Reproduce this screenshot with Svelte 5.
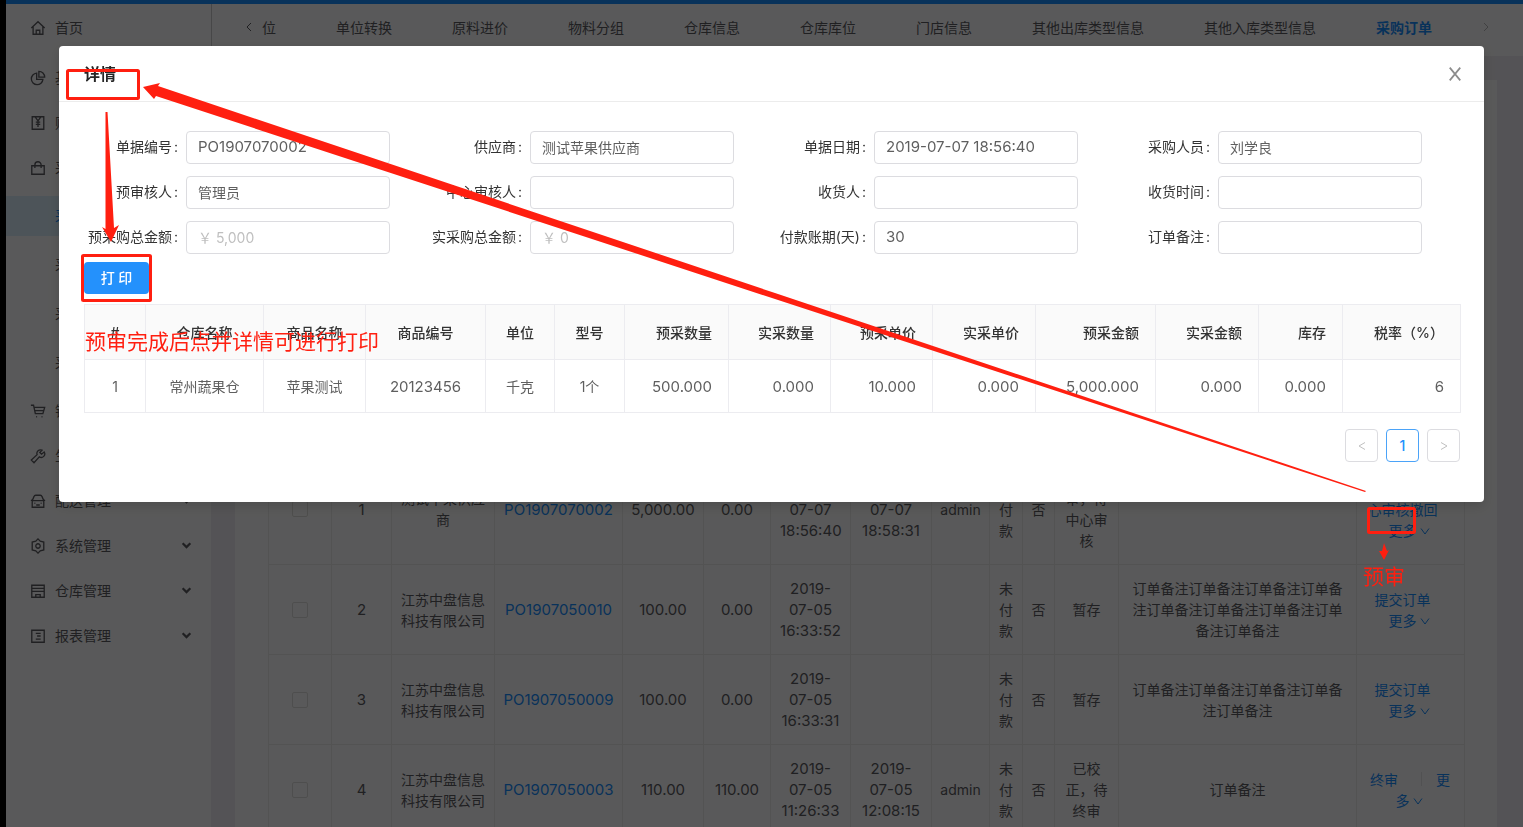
<script>
  const tabs = ["位", "单位转换", "原料进价", "物料分组", "仓库信息", "仓库库位", "门店信息", "其他出库类型信息", "其他入库类型信息", "采购订单"];

  const menuTop = [
    { icon: "home", name: "首页" },
    { icon: "pie", name: "基础资料" },
    { icon: "account", name: "财务管理" },
    { icon: "bag", name: "采购管理" },
  ];
  const subMenu = ["采购订单", "采购入库", "采购退货", "采购报表"];
  const menuBottom = [
    { icon: "cart", name: "销售管理" },
    { icon: "tool", name: "生产管理" },
    { icon: "car", name: "配送管理" },
    { icon: "setting", name: "系统管理" },
    { icon: "shop", name: "仓库管理" },
    { icon: "report", name: "报表管理" },
  ];

  const icons = {
    home: "M1.5 9 9 2l7.5 7M3.5 7.5V16h11V7.5M7 16v-4.500h4V16",
    pie: "M7.500 3.500a6.500 6.500 0 1 0 7 7h-7zM10 1.500v6.500h6.500a6.500 6.500 0 0 0-6.500-6.500z",
    account: "M2.500 2h13v14h-13zM6 2.500l3 4 3-4M6.500 8h5M6.500 10.500h5M9 7v6.500",
    bag: "M2 6.500h14V16H2zM5.500 9V5.500a3.500 3.500 0 0 1 7 0V9",
    cart: "M1 2.500h3L6 12h8.500L16.500 5H5M5.500 8.500h10M7 15.500h1M13 15.500h1",
    tool: "M1.500 13.500 8 7.500a4 4 0 0 1 5.500-5L11 5l2 2 3-2.500a4 4 0 0 1-5.500 5.500l-6 6.500z",
    car: "M2.500 8.500h13V16h-13zM1 8l1.500.5L4.500 4a2 2 0 0 1 2-1.500h5a2 2 0 0 1 2 1.500l2 4.500L17 8M5 11.500h1M12 11.500h1M7 13.500h4",
    setting: "M9 1l2.500 2.500 4 1V9v4.500l-4 1L9 17l-2.500-2.500-4-1v-9l4-1zM9 6.500a2.500 2.500 0 1 0 0 5 2.500 2.500 0 1 0 0-5z",
    shop: "M2 2.500h14V16H2zM2 6h14M2 9.500h14M6.500 16v-3h5v3",
    report: "M2 2.500h14v13.500H2zM6.500 6h5.500M8 9h4M6.500 12.500h5.500",
  };

  const fields = [
    { id: "billNo", label: "单据编号", value: "PO1907070002", num: true },
    { id: "supplier", label: "供应商", value: "测试苹果供应商" },
    { id: "billDate", label: "单据日期", value: "2019-07-07 18:56:40", num: true },
    { id: "buyer", label: "采购人员", value: "刘学良" },
    { id: "preAuditor", label: "预审核人", value: "管理员" },
    { id: "centerAuditor", label: "中心审核人", value: "" },
    { id: "receiver", label: "收货人", value: "" },
    { id: "receiveTime", label: "收货时间", value: "" },
    { id: "preTotal", label: "预采购总金额", value: "￥ 5,000", disabled: true },
    { id: "realTotal", label: "实采购总金额", value: "￥ 0", disabled: true },
    { id: "payDays", label: "付款账期(天)", value: "30", num: true },
    { id: "remark", label: "订单备注", value: "" },
  ];

  const columns = [
    { title: "#", width: 61 },
    { title: "仓库名称", width: 118 },
    { title: "商品名称", width: 102 },
    { title: "商品编号", width: 120, num: true },
    { title: "单位", width: 69 },
    { title: "型号", width: 70 },
    { title: "预采数量", width: 104, right: true, num: true },
    { title: "实采数量", width: 102, right: true, num: true },
    { title: "预采单价", width: 102, right: true, num: true },
    { title: "实采单价", width: 103, right: true, num: true },
    { title: "预采金额", width: 120, right: true, num: true },
    { title: "实采金额", width: 103, right: true, num: true },
    { title: "库存", width: 84, right: true, num: true },
    { title: "税率（%）", width: 118, right: true, num: true },
  ];
  const items = [
    ["1", "常州蔬果仓", "苹果测试", "20123456", "千克", "1个", "500.000", "0.000", "10.000", "0.000", "5,000.000", "0.000", "0.000", "6"],
  ];

  const orderWidths = [63, 60, 103, 128, 81, 67, 80, 81, 58, 33, 32, 64, 238, 108];
  const company = "江苏中盘信息科技有限公司";
  const note = "订单备注";
  const orders = [
    { no: 1, supplier: "测试苹果供应商", bill: "PO1907070002", pre: "5,000.00", real: "0.00", created: "2019-07-07 18:56:40", audited: "2019-07-07 18:58:31", user: "admin", status: ["已预", "审，待", "中心审", "核"], note: "" },
    { no: 2, supplier: company, bill: "PO1907050010", pre: "100.00", real: "0.00", created: "2019-07-05 16:33:52", audited: "", user: "", status: ["暂存"], note: note.repeat(9) },
    { no: 3, supplier: company, bill: "PO1907050009", pre: "100.00", real: "0.00", created: "2019-07-05 16:33:31", audited: "", user: "", status: ["暂存"], note: note.repeat(5) },
    { no: 4, supplier: company, bill: "PO1907050003", pre: "110.00", real: "110.00", created: "2019-07-05 11:26:33", audited: "2019-07-05 12:08:15", user: "admin", status: ["已校", "正，待", "终审"], note },
  ];
</script>

{#snippet icon(name)}
  <svg class="icon" viewBox="0 0 18 18"><path d={icons[name]} /></svg>
{/snippet}

{#snippet down()}
  <svg class="down" viewBox="0 0 10 10"><path d="M1 2.500 5 8l4-5.500" /></svg>
{/snippet}

<div class="page">
  <aside>
    <ul class="menu">
      {#each menuTop as item}
        <li>{@render icon(item.icon)}<a href="#menu">{item.name}</a></li>
      {/each}
    </ul>
    <ul class="sub">
      {#each subMenu as name, i}
        <li class:selected={i === 0}><a href="#sub">{name}</a></li>
      {/each}
    </ul>
    <ul class="menu">
      {#each menuBottom as item}
        <li>
          {@render icon(item.icon)}<a href="#menu">{item.name}</a>
          <svg class="arrow" viewBox="0 0 10 10"><path d="M1.500 3 5 6.500 8.500 3" /></svg>
        </li>
      {/each}
    </ul>
  </aside>

  <main>
    <nav>
      <span class="step">
        <svg viewBox="0 0 10 10"><path d="M7 1 3 5l4 4" /></svg>
      </span>
      <div class="tabs">
        {#each tabs as tab, i}
          <a href="#tab" class:active={i === tabs.length - 1}>{tab}</a>
        {/each}
      </div>
      <span class="step next">
        <svg viewBox="0 0 10 10"><path d="M3 1l4 4-4 4" /></svg>
      </span>
    </nav>
    <section class="card">
      <table class="orders">
        <colgroup>
          {#each orderWidths as w}<col style="width: {w}px" />{/each}
        </colgroup>
        <tbody>
          {#each orders as order}
            <tr>
              <td><input type="checkbox" aria-label="选择 {order.no}" /></td>
              <td class="num">{order.no}</td>
              <td>{order.supplier}</td>
              <td class="num"><a href="#order">{order.bill}</a></td>
              <td class="num">{order.pre}</td>
              <td class="num">{order.real}</td>
              <td class="num date">{order.created}</td>
              <td class="num date">{order.audited}</td>
              <td>{order.user}</td>
              <td>未付款</td>
              <td>否</td>
              <td>{#each order.status as line}<div>{line}</div>{/each}</td>
              <td>{order.note}</td>
              <td>
                {#if order.no === 1}
                  <div class="action"><a href="#edit">编辑</a></div>
                  <div class="action"><a href="#audit">心审核撤回</a></div>
                  <div class="more"><a href="#more">更多 {@render down()}</a></div>
                {:else if order.no === 4}
                  <div class="split"><a href="#audit">终审</a><i></i><a href="#more">更</a></div>
                  <div class="more"><a href="#more">多 {@render down()}</a></div>
                {:else}
                  <div class="action"><a href="#audit">提交订单</a></div>
                  <div class="more"><a href="#more">更多 {@render down()}</a></div>
                {/if}
              </td>
            </tr>
          {/each}
        </tbody>
      </table>
    </section>
  </main>
</div>

<div class="mask">
  <div class="modal" role="dialog" aria-labelledby="modal-title">
    <header>
      <h2 id="modal-title">详情</h2>
      <button class="close" aria-label="关闭">
        <svg viewBox="0 0 12 12"><path d="M1.500 0.500l9 11M10.500 0.500l-9 11" /></svg>
      </button>
    </header>
    <div class="body">
      <form>
        {#each fields as field}
          <div class="field">
            <label for={field.id}>{field.label}<span>:</span></label>
            <input id={field.id} class:num={field.num} type="text" value={field.value} disabled={field.disabled} />
          </div>
        {/each}
      </form>
      <button class="print">打 印</button>
      <table class="items">
        <colgroup>
          {#each columns as col}<col style="width: {col.width}px" />{/each}
        </colgroup>
        <thead>
          <tr>
            {#each columns as col}<th class:right={col.right}>{col.title}</th>{/each}
          </tr>
        </thead>
        <tbody>
          {#each items as row}
            <tr>
              {#each row as cell, i}<td class:right={columns[i].right} class:num={columns[i].num}>{cell}</td>{/each}
            </tr>
          {/each}
        </tbody>
      </table>
      <div class="pager">
        <button disabled aria-label="上一页"><svg viewBox="0 0 10 10"><path d="M8 1.500 2 5l6 3.500" /></svg></button>
        <button class="current">1</button>
        <button disabled aria-label="下一页"><svg viewBox="0 0 10 10"><path d="M2 1.500 8 5l-6 3.500" /></svg></button>
      </div>
    </div>
  </div>
</div>

<svg class="marks" width="1523" height="827" viewBox="0 0 1523 827">
  <g class="boxes">
    <rect x="67.500" y="70.500" width="71" height="28" rx="1" />
    <rect x="82.500" y="255.500" width="68" height="45" rx="1" />
    <rect x="1368.500" y="508.500" width="46" height="24" rx="1" />
  </g>
  <path d="M143 87 160 83 158 86 775 293 1366 491 1365 492 775 299 156 96 154 99z" />
  <path d="M105.500 112h2l6.500 116 5-3-8 17-9-15 3.500 2z" />
  <path d="M1384 543l3 8 2-1-5 10-5-9 3 0z" />
  <text x="85" y="349">预审完成后点并详情可进行打印</text>
  <text x="1363" y="584">预审</text>
</svg>

<style>
  :global(body) {
    margin: 0;
    overflow: hidden;
    font: 14px/21px Inter, "Noto Sans CJK SC", sans-serif;
    color: #5c5c5e;
  }
  :global(*) {
    box-sizing: border-box;
  }
  a {
    color: inherit;
    text-decoration: none;
  }
  ul {
    margin: 0;
    padding: 0;
    list-style: none;
  }
  svg {
    fill: none;
    stroke: currentColor;
  }
  button,
  input {
    font: inherit;
  }
  .num {
    font-size: 15px;
  }

  .page {
    display: flex;
    height: 100vh;
    overflow: hidden;
    border-left: 6px solid #000;
    background: #f0eef2;
  }

  aside {
    flex: 0 0 205px;
    padding-top: 1px;
    border-top: 4px solid #1890ff;
    background: #fff;
  }
  .menu li {
    display: flex;
    align-items: center;
    height: 45px;
    padding: 0 19px 0 23px;
  }
  .menu:first-child li:first-child {
    margin-bottom: 5px;
  }
  .icon {
    width: 18px;
    height: 18px;
    margin-right: 8px;
    padding: 1px;
    stroke-width: 1.5;
  }
  .arrow {
    width: 11px;
    height: 11px;
    margin-left: auto;
    stroke-width: 2;
  }
  .sub {
    display: flex;
    flex-direction: column;
    gap: 9px;
    padding: 6px 0 5px;
  }
  .sub li {
    height: 40px;
    padding-left: 49px;
    line-height: 40px;
  }
  .sub .selected {
    background: #dcf0fb;
    color: #1890ff;
  }

  main {
    flex: 1;
    min-width: 0;
    border-top: 4px solid #1890ff;
  }
  nav {
    display: flex;
    align-items: center;
    height: 52px;
    padding: 0 32px 6px;
    background: #fff;
    border-left: 1px solid #ccc;
  }
  .tabs {
    display: flex;
    flex: 1;
    margin-left: -22px;
    white-space: nowrap;
  }
  .tabs a {
    padding: 0 30px;
  }
  .tabs .active {
    color: #1890ff;
    font-weight: 700;
  }
  .step svg {
    display: block;
    width: 10px;
    height: 10px;
  }
  .next {
    color: #bbb;
  }
  .card {
    margin: 24px 26px 0 24px;
    padding: 373px 33px 0;
    background: #fff;
  }

  table {
    width: 100%;
    table-layout: fixed;
    border-collapse: collapse;
  }
  .orders td {
    height: 90px;
    padding: 0 8px;
    border: 1px solid #eeeeec;
    text-align: center;
  }
  .orders tr:first-child td {
    height: 111px;
  }
  .orders .date {
    padding: 0 9px;
  }
  .orders a {
    color: #1890ff;
  }
  .orders input {
    appearance: none;
    display: block;
    width: 16px;
    height: 16px;
    margin: 0 auto;
    border: 1px solid #e0e0dc;
    border-radius: 2px;
  }
  .action {
    padding-right: 16px;
  }
  .more {
    padding-right: 2px;
  }
  .down {
    width: 10px;
    height: 10px;
  }
  .split {
    display: flex;
    align-items: center;
    padding: 0 6px 0 5px;
  }
  .split i {
    width: 1px;
    height: 14px;
    margin: 0 14px 0 auto;
    background: #e8e8e8;
  }

  .mask {
    position: fixed;
    inset: 0 0 0 6px;
    padding: 46px 39px 0 53px;
    background: rgba(0, 0, 2, 0.65);
  }
  .modal {
    border-radius: 4px;
    background: #fff;
    box-shadow: 0 4px 12px rgba(0, 0, 0, 0.15);
    color: #5f5f5f;
  }
  header {
    display: flex;
    align-items: center;
    justify-content: space-between;
    height: 56px;
    padding: 0 22px 0 25px;
    border-bottom: 1px solid #ececec;
  }
  h2 {
    margin: 0;
    color: #262626;
    font-size: 16px;
    line-height: 24px;
  }
  .close {
    display: grid;
    padding: 0;
    border: 0;
    background: none;
    color: #8c8c8c;
  }
  .close svg {
    width: 14px;
    height: 14px;
    stroke-width: 1.5;
  }
  .body {
    padding: 29px 24px 40px 25px;
  }
  form {
    display: grid;
    grid-template-columns: repeat(4, minmax(0, 1fr));
    row-gap: 12px;
  }
  .field {
    display: flex;
    align-items: center;
    padding-right: 38px;
  }
  label {
    flex: 0 0 102px;
    padding-bottom: 2px;
    color: #333;
    text-align: right;
    white-space: nowrap;
  }
  label span {
    margin: 0 8px 0 2px;
  }
  .field input {
    flex: 1;
    min-width: 0;
    height: 33px;
    padding: 0 11px 2px;
    border: 1px solid #dcdce0;
    border-radius: 4px;
    background: #fff;
    color: #5f5f5f;
  }
  .field input:disabled {
    color: #bfbfbf;
  }
  .print {
    display: block;
    width: 65px;
    height: 32px;
    margin: 8px 0 10px;
    padding: 0 0 2px;
    border: 0;
    border-radius: 4px;
    background: #2491fc;
    color: #fff;
    font-weight: 500;
  }
  .items th,
  .items td {
    height: 53px;
    padding: 0 16px;
    border: 1px solid #ececf0;
    text-align: center;
    white-space: nowrap;
  }
  .items th {
    height: 55px;
    background: #fafafa;
    color: #333;
    font-weight: 500;
  }
  .items .right {
    text-align: right;
  }
  .pager {
    display: flex;
    justify-content: flex-end;
    gap: 8px;
    padding-top: 16px;
  }
  .pager button {
    width: 33px;
    height: 33px;
    padding: 0;
    border: 1px solid #dcdce0;
    border-radius: 4px;
    background: #fff;
    color: #c0c0c0;
  }
  .pager svg {
    width: 10px;
    height: 10px;
  }
  .pager .current {
    border-color: #4ba3f8;
    color: #2491fc;
    font-weight: 500;
  }

  /* red guide marks drawn over the whole screen */
  .marks {
    position: absolute;
    top: 0;
    left: 0;
    fill: #ff1f10;
    stroke: none;
    pointer-events: none;
  }
  .boxes {
    fill: none;
    stroke: #ff1f10;
    stroke-width: 3;
  }
  .marks text {
    font-size: 21px;
  }
</style>
